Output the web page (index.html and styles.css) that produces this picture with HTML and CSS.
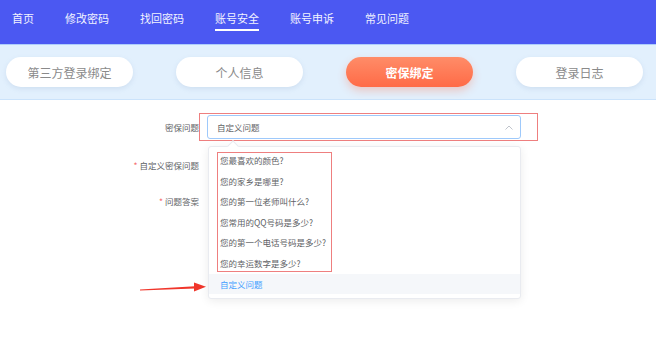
FILE: index.html
```html
<!DOCTYPE html>
<html>
<head>
  <meta charset="UTF-8">
  <title>账号安全</title>
  <link rel="stylesheet" href="styles.css">
</head>
<body>
  <div class="topnav">
    <a class="nav-item">首页</a>
    <a class="nav-item">修改密码</a>
    <a class="nav-item">找回密码</a>
    <a class="nav-item active">账号安全</a>
    <a class="nav-item">账号申诉</a>
    <a class="nav-item">常见问题</a>
  </div>

  <div class="tabs">
    <div class="pill">第三方登录绑定</div>
    <div class="pill">个人信息</div>
    <div class="pill active">密保绑定</div>
    <div class="pill">登录日志</div>
  </div>

  <div class="form">
    <div class="row">
      <div class="label">密保问题</div>
      <div class="mark">
        <div class="select">
          <span class="value">自定义问题</span>
          <svg class="chevron" width="8" height="5" viewBox="0 0 8 5">
            <path d="M0.5 4.5 L4 1 L7.5 4.5" fill="none" stroke="#c0c4cc" stroke-width="1"/>
          </svg>

          <!-- open dropdown -->
          <div class="dropdown">
            <div class="caret"></div>
            <div class="group">
              <div class="option">您最喜欢的颜色?</div>
              <div class="option">您的家乡是哪里?</div>
              <div class="option">您的第一位老师叫什么?</div>
              <div class="option">您常用的QQ号码是多少?</div>
              <div class="option">您的第一个电话号码是多少?</div>
              <div class="option">您的幸运数字是多少?</div>
            </div>
            <div class="option selected">自定义问题</div>
          </div>
        </div>
      </div>
    </div>
    <div class="row">
      <div class="label"><span class="star">*</span> 自定义密保问题</div>
    </div>
    <div class="row">
      <div class="label"><span class="star">*</span> 问题答案</div>
    </div>
  </div>

  <svg class="arrow" width="70" height="14" viewBox="0 0 70 14">
    <polygon points="0,9.6 55,6.2 55,8.6 0,10.4" fill="#f0362b"/>
    <polygon points="54,2.5 66,6.8 54,11.5" fill="#f0362b"/>
  </svg>
</body>
</html>
```

FILE: styles.css
```css
html {
  min-height: 343px;
}

body {
  margin: 0;
  min-height: 343px;
  background: #fff;
  font-family: "Noto Sans CJK SC", "Noto Sans", sans-serif;
  position: relative;
}

.topnav {
  height: 44px;
  background: #4b58f2;
  display: flex;
  gap: 31px;
  padding-left: 12px;
}

.nav-item {
  color: #f2f3ff;
  font-size: 11px;
  line-height: 14px;
  padding-top: 11px;
  height: 18px;
  border-bottom: 2px solid transparent;
}

.nav-item.active {
  border-bottom-color: #fff;
}

.tabs {
  border-top: 1px solid #aecdfb;
  border-bottom: 1px solid #cbe3fb;
  background: #e2f0fd;
  height: 54px;
  display: flex;
  gap: 43px;
  padding-left: 6px;
  align-items: center;
}

.pill {
  width: 127px;
  height: 30px;
  border-radius: 15px;
  background: #fff;
  color: #8a8a8a;
  font-size: 12px;
  display: flex;
  align-items: center;
  justify-content: center;
  box-shadow: 0 2px 5px rgba(120, 150, 190, 0.18);
}

.pill.active {
  background: linear-gradient(180deg, #ff8c68 0%, #ff6b47 100%);
  color: #fff;
  font-weight: bold;
  box-shadow: 0 4px 8px rgba(255, 110, 70, 0.3);
}

.form {
  padding-top: 13px;
  display: flex;
  flex-direction: column;
  gap: 12px;
  font-size: 8.5px;
  color: #606266;
}

.row {
  display: flex;
  align-items: center;
  min-height: 24px;
}

.label {
  width: 199px;
  text-align: right;
  color: #606266;
}

.star {
  color: #f56c6c;
}

.mark {
  border: 1px solid #ee7f7f;
  padding: 1px 16px 1px 7px;
}

.select {
  position: relative;
  width: 314px;
  height: 24px;
  box-sizing: border-box;
  border: 1px solid #9ec9fb;
  border-radius: 3px;
  display: flex;
  align-items: center;
  justify-content: space-between;
  padding: 0 7px 0 9px;
  background: #fff;
}

.chevron {
  display: block;
}

.dropdown {
  position: absolute;
  top: 30px;
  left: 0;
  width: 313px;
  box-sizing: border-box;
  background: #fff;
  border: 1px solid #e9ebf0;
  border-radius: 3px;
  box-shadow: 0 2px 10px rgba(0, 0, 0, 0.08);
  padding: 3px 0 4px;
  z-index: 2;
}

.caret {
  position: absolute;
  top: -5px;
  left: 20px;
  width: 7px;
  height: 7px;
  background: #fff;
  border-left: 1px solid #e9ebf0;
  border-top: 1px solid #e9ebf0;
  transform: rotate(45deg);
}

.option {
  height: 20.6px;
  line-height: 20.6px;
  padding-left: 11px;
  white-space: nowrap;
  color: #606266;
}

.group {
  width: fit-content;
  margin-left: 6px;
  padding-right: 8px;
  outline: 1px solid #ee7f7f;
  outline-offset: -3px;
}

.group .option {
  padding-left: 5px;
}

.option.selected {
  background: #f5f7fa;
  color: #409eff;
}

.arrow {
  position: absolute;
  left: 140px;
  top: 280px;
}
```
